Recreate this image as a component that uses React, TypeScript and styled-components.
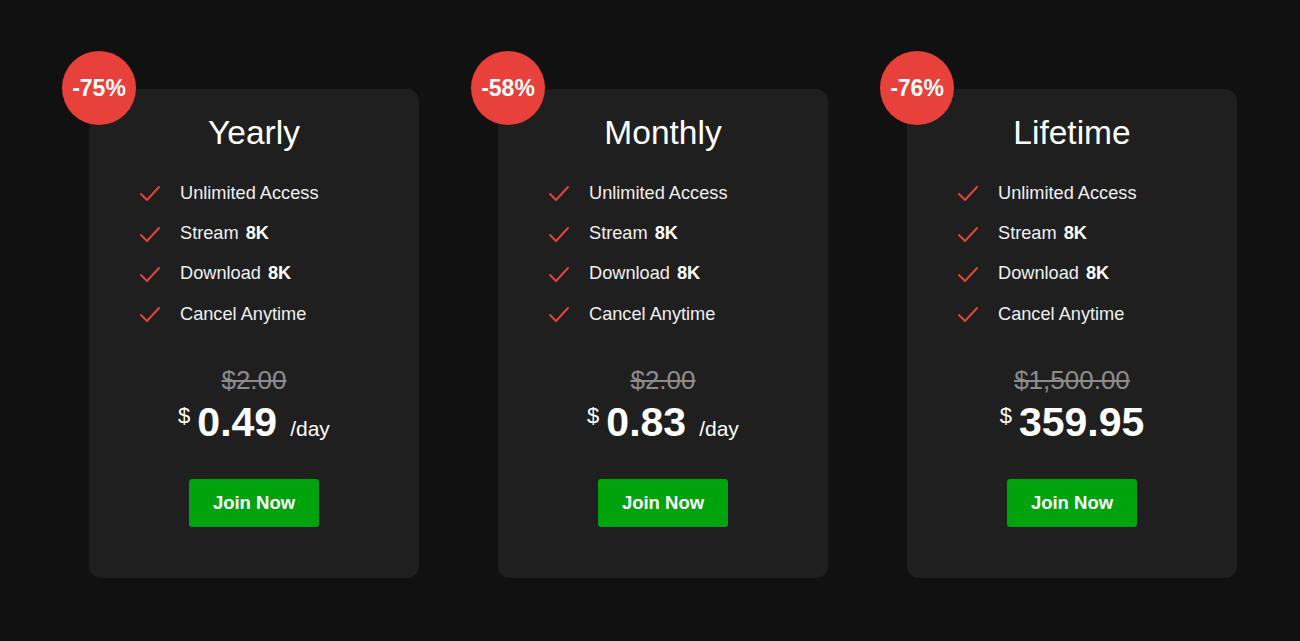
import React from "react";
import styled, { createGlobalStyle } from "styled-components";

type Plan = {
  name: string;
  discount: string;
  oldPrice: string;
  price: string;
  unit?: string;
};

const plans: Plan[] = [
  { name: "Yearly", discount: "-75%", oldPrice: "$2.00", price: "0.49", unit: "/day" },
  { name: "Monthly", discount: "-58%", oldPrice: "$2.00", price: "0.83", unit: "/day" },
  { name: "Lifetime", discount: "-76%", oldPrice: "$1,500.00", price: "359.95" },
];

const Check = () => (
  <svg width="22" height="18" viewBox="0 0 22 18" fill="none">
    <polyline points="2,10 8,16 20,3" stroke="#e5423b" strokeWidth="2" strokeLinecap="round" strokeLinejoin="round" />
  </svg>
);

const App: React.FC = () => {
  return (
    <>
      <GlobalStyle />
      <Page>
        {plans.map((p) => (
          <Card key={p.name}>
            <Badge>{p.discount}</Badge>
            <Title>{p.name}</Title>
            <Features>
              <Feature>
                <Check />
                <span>Unlimited Access</span>
              </Feature>
              <Feature>
                <Check />
                <span>
                  Stream <b>8K</b>
                </span>
              </Feature>
              <Feature>
                <Check />
                <span>
                  Download <b>8K</b>
                </span>
              </Feature>
              <Feature>
                <Check />
                <span>Cancel Anytime</span>
              </Feature>
            </Features>
            <OldPrice>{p.oldPrice}</OldPrice>
            <PriceRow>
              <Currency>$</Currency>
              <Amount>{p.price}</Amount>
              {p.unit && <Unit>{p.unit}</Unit>}
            </PriceRow>
            <JoinButton>Join Now</JoinButton>
          </Card>
        ))}
      </Page>
    </>
  );
};

const GlobalStyle = createGlobalStyle`
  html, body {
    margin: 0;
    padding: 0;
    background: #111111;
  }
  body {
    font-family: "Liberation Sans", Arial, sans-serif;
  }
`;

const Page = styled.div`
  display: flex;
  gap: 79px;
  height: 641px;
  box-sizing: border-box;
  padding: 89px 0 0 89px;
  background: #111111;
`;

const Card = styled.div`
  position: relative;
  width: 330px;
  height: 489px;
  box-sizing: border-box;
  padding: 24px 0 0;
  background: #1f1f1f;
  border-radius: 12px;
  display: flex;
  flex-direction: column;
  align-items: center;
  color: #ffffff;
`;

const Badge = styled.div`
  position: absolute;
  left: -27px;
  top: -38px;
  width: 74px;
  height: 74px;
  border-radius: 50%;
  background: #e8403a;
  color: #fff;
  font-size: 23px;
  font-weight: bold;
  display: flex;
  align-items: center;
  justify-content: center;
`;

const Title = styled.div`
  font-size: 33.5px;
  line-height: 40px;
  color: #fff;
`;

const Features = styled.ul`
  list-style: none;
  margin: 20px 0 0;
  padding: 0 0 0 50px;
  align-self: stretch;
`;

const Feature = styled.li`
  display: flex;
  align-items: center;
  gap: 19px;
  height: 40.4px;
  font-size: 18.2px;
  color: #f0f0f0;

  svg {
    flex-shrink: 0;
  }
  b {
    font-weight: bold;
    color: #fff;
    margin-left: 2px;
  }
`;

const OldPrice = styled.div`
  margin-top: 31px;
  font-size: 26px;
  line-height: 28px;
  color: #8c8c8c;
  text-decoration: line-through;
`;

const PriceRow = styled.div`
  margin-top: 4px;
  height: 48px;
  display: flex;
  align-items: baseline;
`;

const Currency = styled.span`
  font-size: 22px;
  align-self: flex-start;
  margin-top: 5px;
  margin-right: 7px;
`;

const Amount = styled.span`
  font-size: 41px;
  line-height: 48px;
  font-weight: bold;
`;

const Unit = styled.span`
  font-size: 21px;
  margin-left: 13px;
`;

const JoinButton = styled.button`
  margin-top: 33px;
  width: 130px;
  height: 48px;
  border: none;
  border-radius: 3px;
  background: #00a30c;
  color: #fff;
  font-family: "Liberation Sans", Arial, sans-serif;
  font-size: 18.5px;
  font-weight: bold;
  cursor: pointer;
`;

export default App;
